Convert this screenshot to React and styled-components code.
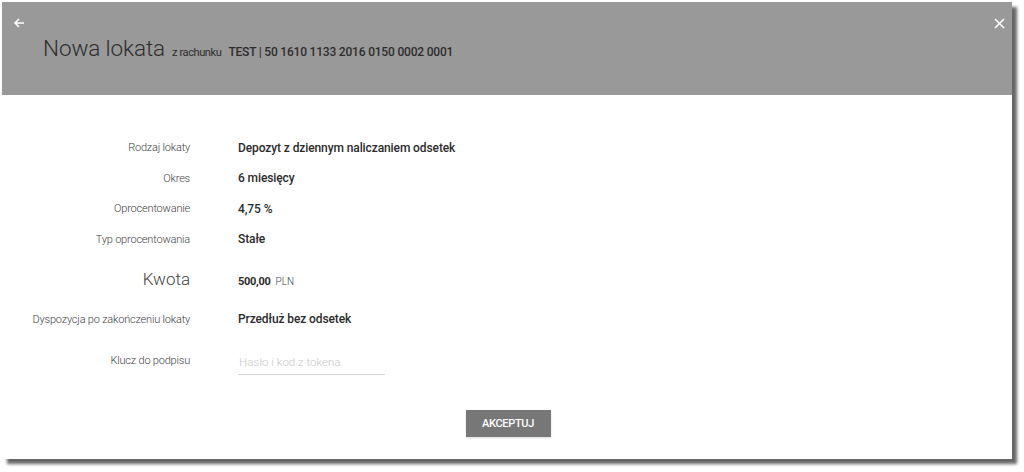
import React from "react";
import styled, { createGlobalStyle } from "styled-components";

const Global = createGlobalStyle`
  html, body { margin: 0; padding: 0; background: #fff; }
  body { font-family: Roboto, "Liberation Sans", sans-serif; }
  * { box-sizing: border-box; }
`;

const Page = styled.div`
  padding: 2px 0 0 2px;
  width: 1024px;
  height: 472px;
`;

const Card = styled.div`
  width: 1010px;
  height: 457px;
  background: #fff;
  box-shadow: 5px 5px 3px rgba(0, 0, 0, 0.6);
  display: flex;
  flex-direction: column;
`;

const Header = styled.div`
  position: relative;
  height: 93px;
  background: #999999;
  display: flex;
  align-items: flex-start;
  padding: 31px 0 0 41px;
`;

const IconButton = styled.button`
  position: absolute;
  top: ${(p) => p.$top}px;
  ${(p) => (p.$right ? `right: ${p.$right}px;` : `left: ${p.$left}px;`)}
  background: none;
  border: 0;
  padding: 0;
  width: 14px;
  height: 14px;
  display: flex;
  align-items: center;
  justify-content: center;
  cursor: pointer;
`;

const TitleLine = styled.div`
  display: flex;
  align-items: baseline;
  gap: 7px;
  color: #2d2d2d;
`;

const Title = styled.h1`
  margin: 0;
  font-weight: 300;
  font-size: 22.5px;
  line-height: 30px;
  letter-spacing: -0.1px;
`;

const Sub = styled.span`
  font-size: 11px;
  font-weight: 400;
  letter-spacing: -0.4px;
`;

const Account = styled.span`
  font-size: 12px;
  font-weight: 500;
  letter-spacing: -0.2px;
`;

const Body = styled.div`
  flex: 1;
  display: flex;
  flex-direction: column;
  padding-top: 37px;
`;

const Row = styled.div`
  display: grid;
  grid-template-columns: 188px 1fr;
  column-gap: 48px;
  align-items: center;
  height: ${(p) => p.$h}px;
`;

const Label = styled.div`
  text-align: right;
  color: #3f3f3f;
  font-weight: 300;
  font-size: ${(p) => (p.$big ? "17px" : "11px")};
  letter-spacing: ${(p) => (p.$big ? "0" : "-0.2px")};
`;

const Value = styled.div`
  color: #2b2b2b;
  font-weight: 500;
  font-size: 12px;
  letter-spacing: -0.1px;
`;

const Amount = styled.span`
  font-size: 11px;
  font-weight: 700;
  color: #2b2b2b;
  letter-spacing: -0.3px;
`;

const Currency = styled.span`
  font-size: 10px;
  font-weight: 300;
  color: #444;
  margin-left: 5px;
`;

const Input = styled.input`
  width: 147px;
  border: 0;
  border-bottom: 1px solid #d8d8d8;
  padding: 0 0 5px 1px;
  margin-top: 9px;
  font-family: inherit;
  font-size: 11.5px;
  font-weight: 300;
  outline: none;
  background: transparent;
  &::placeholder { color: #c8c8c8; }
`;

const Footer = styled.div`
  display: flex;
  justify-content: center;
  padding: 24px 0 0 2px;
`;

const Button = styled.button`
  width: 85px;
  height: 27px;
  background: #777;
  color: #fff;
  border: 0;
  font-family: inherit;
  font-weight: 500;
  font-size: 11px;
  letter-spacing: -0.3px;
  box-shadow: 0 1px 2px rgba(0,0,0,0.15);
`;

const rows = [
  { label: "Rodzaj lokaty", value: "Depozyt z dziennym naliczaniem odsetek", h: 31 },
  { label: "Okres", value: "6 miesięcy", h: 30 },
  { label: "Oprocentowanie", value: "4,75 %", h: 31 },
  { label: "Typ oprocentowania", value: "Stałe", h: 30 },
];

export default function App() {
  return (
    <>
      <Global />
      <Page>
        <Card>
          <Header>
            <IconButton $top={14} $left={10} aria-label="Wstecz">
              <svg width="12" height="12" viewBox="0 0 12 12">
                <path d="M11 6H2M6 2L2 6l4 4" stroke="#fff" strokeWidth="1.6" fill="none" />
              </svg>
            </IconButton>
            <IconButton $top={14} $right={6} aria-label="Zamknij">
              <svg width="11" height="11" viewBox="0 0 11 11">
                <path d="M1 1l9 9M10 1l-9 9" stroke="#fff" strokeWidth="1.6" />
              </svg>
            </IconButton>
            <TitleLine>
              <Title>Nowa lokata</Title>
              <Sub>z rachunku</Sub>
              <Account>TEST | 50 1610 1133 2016 0150 0002 0001</Account>
            </TitleLine>
          </Header>
          <Body>
            {rows.map((r) => (
              <Row key={r.label} $h={r.h}>
                <Label>{r.label}</Label>
                <Value>{r.value}</Value>
              </Row>
            ))}
            <Row $h={50}>
              <Label $big>Kwota</Label>
              <div>
                <Amount>500,00</Amount>
                <Currency>PLN</Currency>
              </div>
            </Row>
            <Row $h={30}>
              <Label>Dyspozycja po zakończeniu lokaty</Label>
              <Value>Przedłuż bez odsetek</Value>
            </Row>
            <Row $h={52}>
              <Label>Klucz do podpisu</Label>
              <div>
                <Input placeholder="Hasło i kod z tokena" />
              </div>
            </Row>
            <Footer>
              <Button>AKCEPTUJ</Button>
            </Footer>
          </Body>
        </Card>
      </Page>
    </>
  );
}
